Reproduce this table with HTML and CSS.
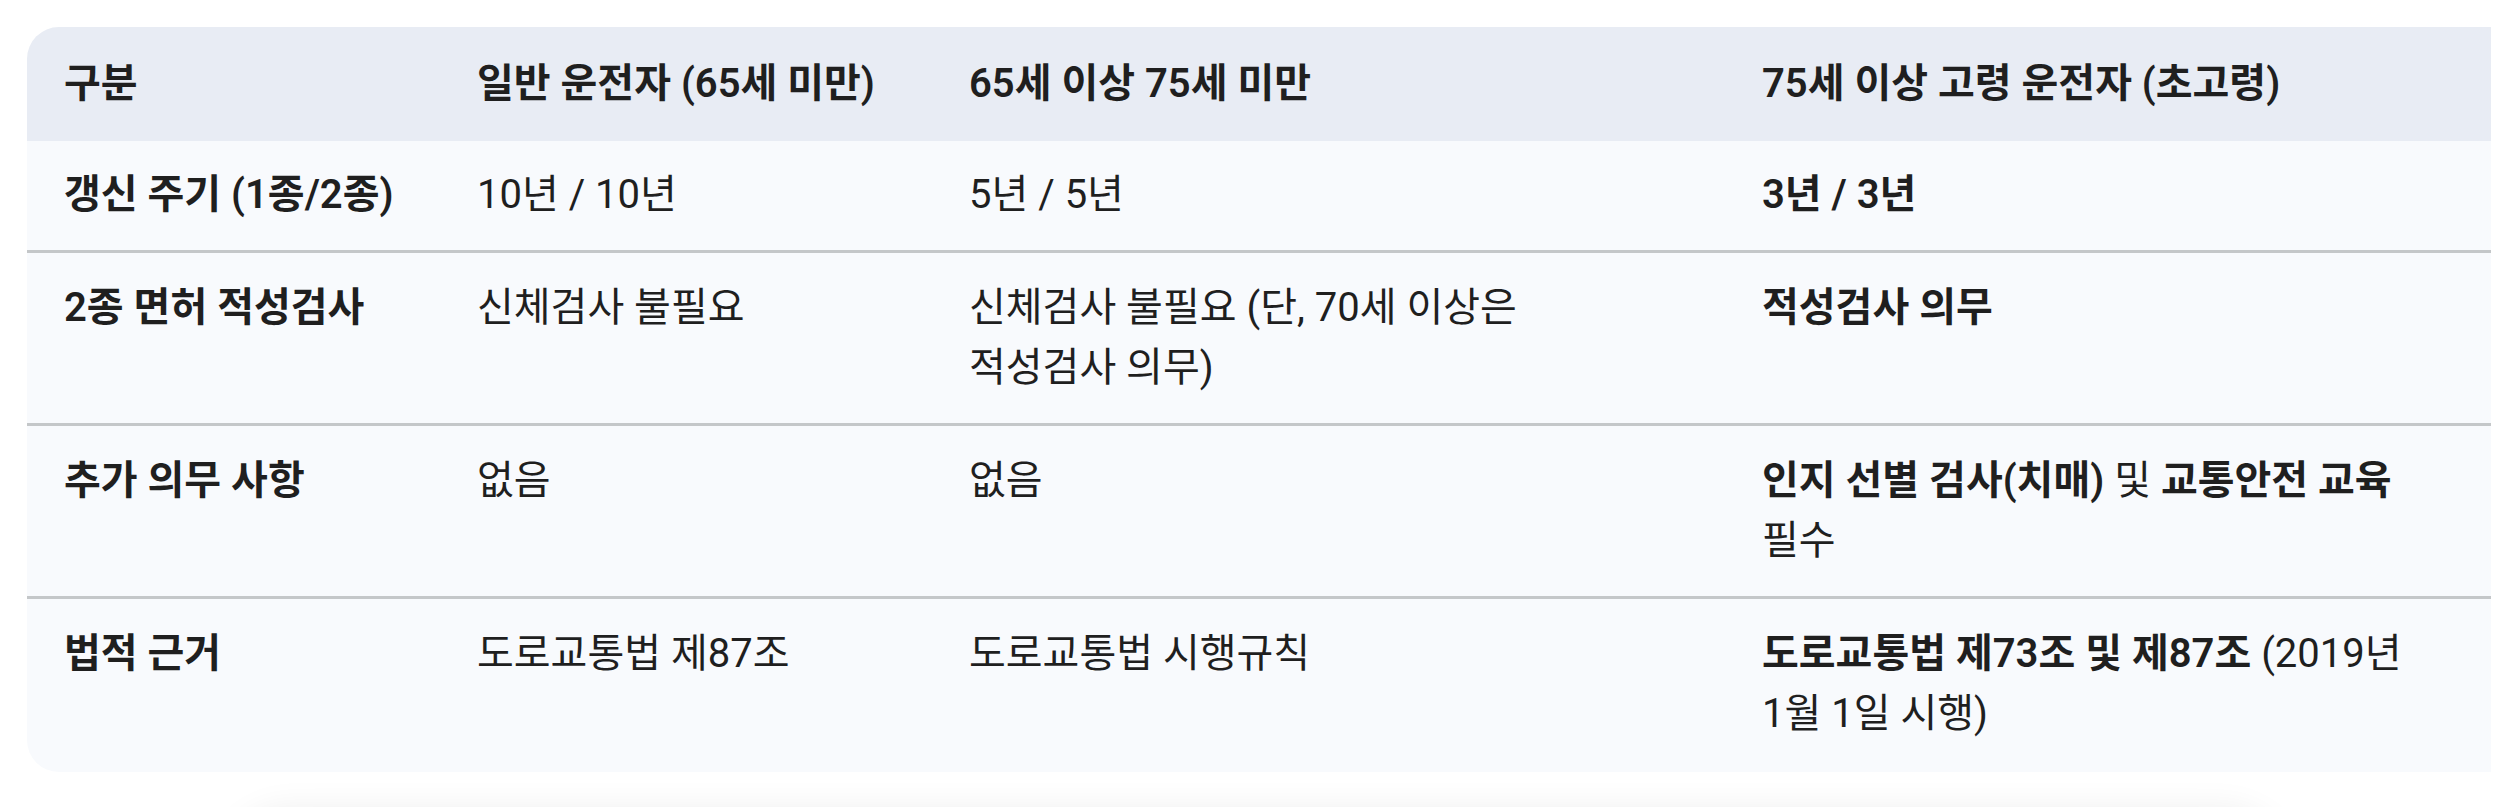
FILE: index.html
```html
<!DOCTYPE html>
<html lang="ko">
<head>
<meta charset="utf-8">
<title>운전면허 갱신 비교</title>
<link rel="stylesheet" href="styles.css">
</head>
<body>
<main class="page">
  <div class="table-wrap">
    <table class="cmp">
      <colgroup>
        <col class="c1"><col class="c2"><col class="c3"><col class="c4">
      </colgroup>
      <thead>
        <tr>
          <th>구분</th>
          <th>일반 운전자 (65세 미만)</th>
          <th>65세 이상 75세 미만</th>
          <th>75세 이상 고령 운전자 (초고령)</th>
        </tr>
      </thead>
      <tbody>
        <tr>
          <td class="b">갱신 주기 (1종/2종)</td>
          <td>10년 / 10년</td>
          <td class="mid">5년 / 5년</td>
          <td class="b">3년 / 3년</td>
        </tr>
        <tr>
          <td class="b">2종 면허 적성검사</td>
          <td>신체검사 불필요</td>
          <td class="mid">신체검사 불필요 (단, 70세 이상은 적성검사 의무)</td>
          <td class="b">적성검사 의무</td>
        </tr>
        <tr>
          <td class="b">추가 의무 사항</td>
          <td>없음</td>
          <td class="mid">없음</td>
          <td><strong>인지 선별 검사(치매)</strong> 및 <strong>교통안전 교육</strong> 필수</td>
        </tr>
        <tr>
          <td class="b">법적 근거</td>
          <td>도로교통법 제87조</td>
          <td class="mid">도로교통법 시행규칙</td>
          <td><strong>도로교통법 제73조 및 제87조</strong> (2019년 1월 1일 시행)</td>
        </tr>
      </tbody>
    </table>
  </div>
</main>
<div class="composer-clip">
  <div class="composer-shadow"></div>
</div>
</body>
</html>
```

FILE: styles.css
```css
html, body {
  margin: 0;
  padding: 0;
  background: #ffffff;
  overflow: hidden;
}

body {
  font-family: Roboto, "Noto Sans CJK KR", sans-serif;
  color: #1f1f1f;
  height: 807px;
  position: relative;
}

.page {
  padding: 27px 21px 0 27px;
}

.table-wrap {
  border-radius: 32px 0 0 32px;
  overflow: hidden;
  width: 2464px;
}

.cmp {
  width: 2464px;
  border-collapse: separate;
  border-spacing: 0;
  table-layout: fixed;
  font-size: 40px;
  line-height: 60px;
  word-break: keep-all;
}

.c1 { width: 413px; }
.c2 { width: 492px; }
.c3 { width: 793px; }
.c4 { width: 766px; }

.cmp thead th {
  background: #e8ecf4;
  text-align: left;
  font-weight: 600;
  padding: 27px 37px;
  vertical-align: top;
}

.cmp tbody td {
  background: #f8fafd;
  padding: 25px 37px;
  vertical-align: top;
  font-weight: 400;
  border-bottom: 3px solid #c4c7c9;
}

.cmp tbody td.mid {
  padding-right: 80px;
}

.cmp tbody tr:first-child td {
  padding-top: 24px;
}

.cmp tbody tr:last-child td {
  border-bottom: none;
  padding-bottom: 28px;
}

.cmp td.b,
.cmp strong {
  font-weight: 600;
}

.composer-clip {
  position: absolute;
  left: 0;
  right: 0;
  top: 773px;
  height: 34px;
  overflow: hidden;
}

.composer-shadow {
  position: absolute;
  left: 230px;
  right: 230px;
  top: 44px;
  height: 120px;
  border-radius: 60px;
  background: #efefef;
  box-shadow: 0 0 34px 8px rgba(0, 0, 0, 0.07);
}
```
